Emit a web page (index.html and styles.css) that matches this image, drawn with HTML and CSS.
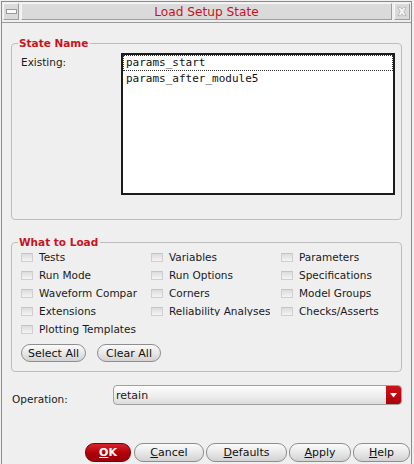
FILE: index.html
```html
<!DOCTYPE html>
<html>
<head>
<meta charset="utf-8">
<link rel="stylesheet" href="styles.css">
</head>
<body>
<div class="window">
  <div class="titlebar">
    <div class="tbtn"><span class="minbar"></span></div>
    <div class="title">Load Setup State</div>
    <div class="tbtn">
      <svg width="15" height="15" viewBox="0 0 15 15"><path d="M3 3 L6 3 L7.5 5 L9 3 L12 3 L9.5 7.5 L12 12 L9 12 L7.5 10 L6 12 L3 12 L5.5 7.5 Z" fill="#f4f4f4" stroke="#b8b8b8" stroke-width="1"/></svg>
    </div>
  </div>
  <div class="content">
    <fieldset class="group state">
      <legend>State Name</legend>
      <div class="staterow">
        <div class="lbl existing">Existing:</div>
        <div class="listbox">
          <div class="item focus">params_start</div>
          <div class="item">params_after_module5</div>
        </div>
      </div>
    </fieldset>
    <fieldset class="group load">
      <legend>What to Load</legend>
      <div class="checks">
        <div class="chk"><span class="box"></span><span class="ctext">Tests</span></div>
        <div class="chk"><span class="box"></span><span class="ctext">Variables</span></div>
        <div class="chk"><span class="box"></span><span class="ctext">Parameters</span></div>
        <div class="chk"><span class="box"></span><span class="ctext">Run Mode</span></div>
        <div class="chk"><span class="box"></span><span class="ctext">Run Options</span></div>
        <div class="chk"><span class="box"></span><span class="ctext">Specifications</span></div>
        <div class="chk"><span class="box"></span><span class="ctext">Waveform Compar</span></div>
        <div class="chk"><span class="box"></span><span class="ctext">Corners</span></div>
        <div class="chk"><span class="box"></span><span class="ctext">Model Groups</span></div>
        <div class="chk"><span class="box"></span><span class="ctext">Extensions</span></div>
        <div class="chk"><span class="box"></span><span class="ctext clipy">Reliability Analyses</span></div>
        <div class="chk"><span class="box"></span><span class="ctext">Checks/Asserts</span></div>
        <div class="chk"><span class="box"></span><span class="ctext">Plotting Templates</span></div>
      </div>
      <div class="selrow">
        <div class="btn small w-sel">Select All</div>
        <div class="btn small w-clr">Clear All</div>
      </div>
    </fieldset>
    <div class="oprow">
      <div class="lbl oplbl">Operation:</div>
      <div class="combo">
        <span class="ctextv">retain</span>
        <span class="drop"><svg width="7" height="5" viewBox="0 0 7 5"><path d="M0 0 H7 L3.5 4.5 Z" fill="#fff"/></svg></span>
      </div>
    </div>
    <div class="btnrow">
      <div class="btn ok"><u>O</u>K</div>
      <div class="btn w-cancel"><u>C</u>ancel</div>
      <div class="btn w-def"><u>D</u>efaults</div>
      <div class="btn w-apply"><u>A</u>pply</div>
      <div class="btn w-help"><u>H</u>elp</div>
    </div>
  </div>
</div>
</body>
</html>
```

FILE: styles.css
```css
html, body {
  margin: 0;
  padding: 0;
  background: #efefef;
  font-family: "DejaVu Sans", sans-serif;
  font-size: 10.5px;
  color: #1a1a1a;
}
.window {
  margin: 1px 0 0 1px;
  width: 411px;
  height: 470px;
  border: 1px solid #8c8c8c;
  border-bottom: none;
  box-sizing: border-box;
  background: #efefef;
}
.titlebar {
  display: flex;
  gap: 2px;
  padding: 1px 1px 0 1px;
  height: 19px;
  border-bottom: 1px solid #9a9a9a;
  background: #efefef;
}
.tbtn {
  width: 16px;
  height: 17px;
  background: #dadada;
  border: 1px solid #f6f6f6;
  border-right-color: #9e9e9e;
  border-bottom-color: #9e9e9e;
  box-sizing: border-box;
  display: flex;
  align-items: center;
  justify-content: center;
}
.minbar {
  width: 9px;
  height: 3px;
  background: #fafafa;
  border: 1px solid #9a9a9a;
}
.title {
  flex: 1;
  height: 17px;
  box-sizing: border-box;
  background: #dadada;
  border: 1px solid #f6f6f6;
  border-right-color: #9e9e9e;
  border-bottom-color: #9e9e9e;
  color: #c8141e;
  font-size: 12.2px;
  text-align: center;
  line-height: 16px;
}
.group {
  margin: 0 9px 0 9px;
  border: 1px solid #bdbdbd;
  border-radius: 4px;
  padding: 0;
}
.group legend {
  color: #c8141e;
  font-weight: bold;
  font-size: 10.5px;
  padding: 0 2px 0 1px;
  margin-left: 6px;
  line-height: 12px;
}
.state {
  margin-top: 14px;
  height: 183px;
  box-sizing: border-box;
}
.staterow {
  display: flex;
  padding: 4px 0 0 9px;
}
.existing {
  width: 100px;
  padding-top: 3px;
}
.listbox {
  width: 274px;
  height: 142px;
  box-sizing: border-box;
  border: 2px solid #1c1c1c;
  background: #fff;
  font-family: "DejaVu Sans Mono", monospace;
  font-size: 11px;
  color: #111;
}
.item {
  height: 15px;
  line-height: 15px;
  padding-left: 3px;
}
.item.focus {
  border: 1px dotted #333;
  height: 14px;
  line-height: 14px;
  padding-left: 2px;
}
.load {
  margin-top: 16px;
  height: 136px;
  box-sizing: border-box;
}
.checks {
  display: grid;
  grid-template-columns: 130px 130px 120px;
  grid-auto-rows: 18px;
  padding: 0 0 0 9px;
}
.chk {
  display: flex;
  align-items: center;
  white-space: nowrap;
}
.box {
  flex: none;
  width: 12px;
  height: 9px;
  box-sizing: border-box;
  border: 1px solid #cfcfcf;
  border-top-color: #c4c4c4;
  background: linear-gradient(#dcdcdc, #f4f4f4);
  margin-right: 6px;
}
.ctext {
  white-space: nowrap;
}
.clipy {
  display: block;
  height: 11px;
  line-height: 12px;
  margin-bottom: 1px;
  overflow: hidden;
}
.selrow {
  display: flex;
  gap: 11px;
  padding: 6px 0 0 9px;
}
.btn {
  height: 19px;
  box-sizing: border-box;
  border: 1px solid #8e8e8e;
  border-radius: 9px;
  background: linear-gradient(#fbfbfb, #e6e6e6 55%, #d2d2d2);
  display: flex;
  align-items: center;
  justify-content: center;
  font-size: 11px;
  color: #111;
}
.btn u {
  text-decoration-thickness: 1px;
  text-underline-offset: 1px;
}
.small {
  height: 18px;
}
.w-sel { width: 65px; }
.w-clr { width: 64px; }
.oprow {
  display: flex;
  align-items: center;
  margin-top: 13px;
  padding-left: 10px;
}
.oplbl {
  width: 101px;
  padding-top: 8px;
}
.combo {
  width: 289px;
  height: 20px;
  box-sizing: border-box;
  border: 1px solid #a0a0a0;
  border-radius: 4px;
  background: linear-gradient(#fdfdfd, #ececec 60%, #dcdcdc);
  display: flex;
  align-items: center;
  justify-content: space-between;
  overflow: hidden;
}
.ctextv {
  padding-left: 2px;
  font-size: 11px;
}
.drop {
  width: 15px;
  height: 20px;
  background: linear-gradient(#d0141c, #a80008);
  display: flex;
  align-items: center;
  justify-content: center;
  border-radius: 0 3px 3px 0;
}
.btnrow {
  display: flex;
  justify-content: flex-end;
  gap: 2px;
  margin-top: 38px;
  padding-right: 1px;
}
.ok {
  width: 46px;
  margin-right: 1px;
  background: linear-gradient(#d8222a, #b00008 55%, #98000a);
  border-color: #7a0006;
  color: #fff;
  font-weight: bold;
}
.w-cancel { width: 70px; }
.w-def { width: 81px; }
.w-apply { width: 62px; }
.w-help { width: 57px; }
```
